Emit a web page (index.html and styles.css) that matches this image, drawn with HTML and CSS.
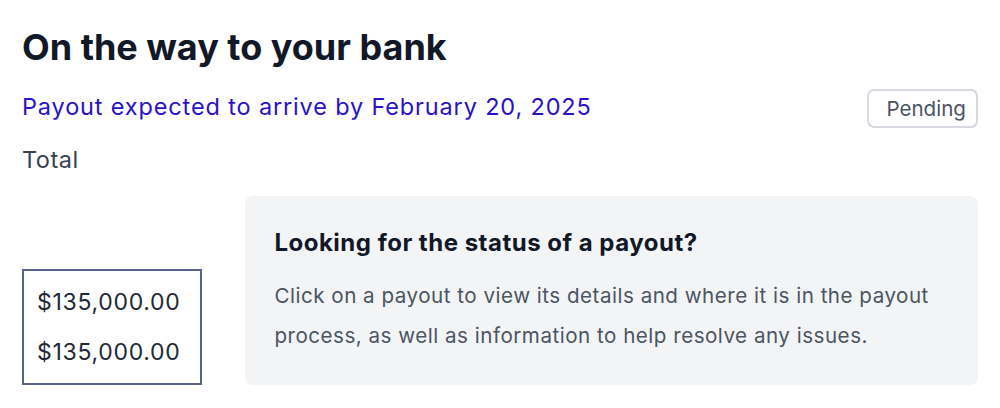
FILE: index.html
```html
<!DOCTYPE html>
<html>
<head>
<meta charset="utf-8">
<link rel="stylesheet" href="styles.css">
</head>
<body>
<main class="page">
  <h1 class="title">On the way to your bank</h1>
  <div class="status-row">
    <p class="expected">Payout expected to arrive by February 20, 2025</p>
    <span class="badge">Pending</span>
  </div>
  <p class="total-label">Total</p>
  <div class="content-row">
    <div class="amounts">
      <div class="amount">$135,000.00</div>
      <div class="amount">$135,000.00</div>
    </div>
    <section class="info">
      <h2 class="info-title">Looking for the status of a payout?</h2>
      <p class="info-text">Click on a payout to view its details and where it is in the payout process, as well as information to help resolve any issues.</p>
    </section>
  </div>
</main>
</body>
</html>
```
FILE: styles.css
```css
html, body {
  margin: 0;
  padding: 0;
  background: #ffffff;
}
body {
  font-family: Inter, "Noto Sans", sans-serif;
}
.page {
  padding: 25px 22px 0 22px;
  display: flex;
  flex-direction: column;
}
.title {
  margin: 0;
  font-size: 36px;
  line-height: 44px;
  font-weight: 700;
  color: #111827;
}
.status-row {
  display: flex;
  align-items: flex-start;
  justify-content: space-between;
  margin-top: 20px;
}
.expected {
  margin: 2px 0 0 0;
  font-size: 23.5px;
  line-height: 32px;
  letter-spacing: 0.85px;
  color: #2b11c7;
}
.badge {
  border: 2px solid #d6dae0;
  border-radius: 7px;
  padding: 4px 10px 3px 17px;
  font-size: 20.6px;
  line-height: 28px;
  color: #4b5563;
}
.total-label {
  margin: 16px 0 0 0;
  font-size: 23.5px;
  line-height: 32px;
  letter-spacing: 0.5px;
  color: #374151;
}
.content-row {
  display: flex;
  align-items: flex-end;
  gap: 43px;
  margin-top: 20px;
}
.amounts {
  border: 2px solid #56648a;
  padding: 6px 20px 6px 13px;
  display: flex;
  flex-direction: column;
}
.amount {
  font-size: 23px;
  line-height: 50px;
  letter-spacing: 0.7px;
  color: #1f2937;
}
.info {
  flex: 1;
  background: #f3f4f6;
  border-radius: 8px;
  padding: 32px 28px 29px 29px;
}
.info-title {
  margin: 0;
  font-size: 24px;
  line-height: 30px;
  font-weight: 700;
  letter-spacing: 0.5px;
  color: #111827;
}
.info-text {
  margin: 18px 0 0 0;
  font-size: 20.6px;
  line-height: 40px;
  letter-spacing: 0.5px;
  color: #4b5563;
}
```
